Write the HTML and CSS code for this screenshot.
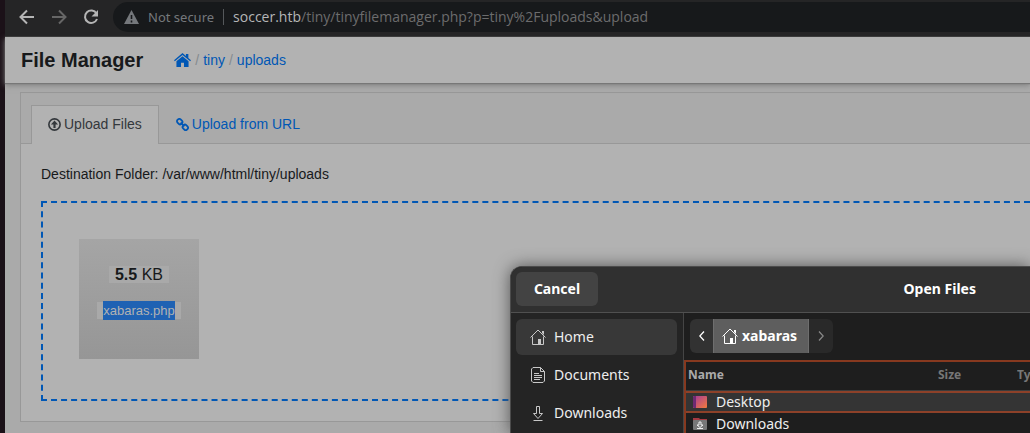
FILE: index.html
```
<!DOCTYPE html>
<html lang="en">
<head>
<meta charset="utf-8">
<title>File Manager</title>
<link rel="stylesheet" href="styles.css">
</head>
<body>
<svg class="defs" aria-hidden="true">
  <symbol id="house" viewBox="0 0 16 16"><path d="M.5 8.500 8 1l7.500 7.500M2.500 7.500v8h11v-8" fill="none" stroke="currentColor"/><path d="M8 10h3v6H8zM12 2h2v4l-2-2z" fill="currentColor"/></symbol>
</svg>
<div class="window">
  <header class="toolbar">
    <button class="tool" aria-label="Back"><svg viewBox="0 0 16 16"><path d="M15 8H2M8 1.500 1.500 8 8 14.500" fill="none" stroke="currentColor" stroke-width="2"/></svg></button>
    <button class="tool dim" aria-label="Forward"><svg viewBox="0 0 16 16"><path d="M1 8h13M8 1.500 14.500 8 8 14.500" fill="none" stroke="currentColor" stroke-width="2"/></svg></button>
    <button class="tool" aria-label="Reload"><svg viewBox="0 0 16 16"><path d="M13.500 4.500A6.200 6.200 0 1 0 14 10" fill="none" stroke="currentColor" stroke-width="2"/><path d="M15 1v6.500H8.500z" fill="currentColor"/></svg></button>
    <div class="omnibox">
      <svg class="warn" viewBox="0 0 15 14"><path d="M7.500 0 15 14H0z" fill="currentColor"/><path d="M7.500 5v4M7.500 10.500v2" stroke="#17191b" stroke-width="1.600"/></svg>
      <span class="secure">Not secure</span>
      <span class="url"><b>soccer.htb</b>/tiny/tinyfilemanager.php?p=tiny%2Fuploads&amp;upload</span>
    </div>
  </header>
  <nav class="navbar">
    <h1 class="brand">File Manager</h1>
    <div class="crumbs">
      <a href="#" aria-label="Home"><svg class="home" viewBox="0 0 16 13"><path d="M8 0 0 6.700l.8 1L8 1.900l7.200 5.800.8-1-2.500-2.100V.8h-2.300v1.900z" fill="currentColor"/><path d="M8 3 2.300 7.600V13h4.300V9h2.800v4h4.300V7.600z" fill="currentColor"/></svg></a>
      <i>/</i><a href="#">tiny</a><i>/</i><a href="#">uploads</a>
    </div>
  </nav>
  <main class="page">
    <section class="card">
      <div class="tabs">
        <a class="tab active" href="#"><svg viewBox="0 0 12 12"><circle cx="6" cy="6" r="5.200" fill="none" stroke="currentColor" stroke-width="1.500"/><path d="M6 2.300 9.300 6H7v3.200H5V6H2.700z" fill="currentColor"/></svg>Upload Files</a>
        <a class="tab" href="#"><svg viewBox="0 0 13 13"><g fill="none" stroke="currentColor" stroke-width="1.800"><rect x="1" y="1.400" width="5.400" height="4.400" rx="1.800" transform="rotate(45 3.700 3.600)"/><rect x="6.600" y="7.200" width="5.400" height="4.400" rx="1.800" transform="rotate(45 9.300 9.400)"/><path d="m4.600 4.600 3.800 3.800"/></g></svg>Upload from URL</a>
      </div>
      <div class="body">
        <p class="dest">Destination Folder: /var/www/html/tiny/uploads</p>
        <div class="drop">
          <div class="file">
            <span class="size"><b>5.5</b> KB</span>
            <span class="name"><mark>xabaras.php</mark></span>
          </div>
        </div>
      </div>
    </section>
  </main>
</div>
<div class="dialog" role="dialog" aria-label="Open Files">
  <div class="titlebar">
    <button class="cancel">Cancel</button>
    <h2 class="title">Open Files</h2>
  </div>
  <div class="panes">
    <div class="places">
      <button class="place on"><svg viewBox="0 0 16 16"><use href="#house"/></svg>Home</button>
      <button class="place"><svg viewBox="0 0 16 16"><path d="M3 .5h7.500l4 4V14l-1.500 1.500H3L1.500 14V2zM10.500.5v4h4M4 6.500h5M4 8.500h8M4 10.500h8M4 12.500h6" fill="none" stroke="currentColor"/></svg>Documents</button>
      <button class="place"><svg viewBox="0 0 16 16"><path d="M6.500 1.500h3v7h3L8 13.500 3.500 8.500h3zM3.500 15.500h9" fill="none" stroke="currentColor"/></svg>Downloads</button>
    </div>
    <div class="browser">
      <div class="path">
        <button class="step" aria-label="Previous"><svg viewBox="0 0 6 10"><path d="M5 .5.8 5 5 9.500" fill="none" stroke="currentColor" stroke-width="1.300"/></svg></button>
        <button class="here"><svg viewBox="0 0 16 16"><use href="#house"/></svg>xabaras</button>
        <button class="step off" aria-label="Next"><svg viewBox="0 0 6 10"><path d="M1 .5 5.200 5 1 9.500" fill="none" stroke="currentColor" stroke-width="1.300"/></svg></button>
      </div>
      <div class="listbox">
        <table class="list">
          <thead><tr><th class="cname">Name</th><th class="csize">Size</th><th class="ctype">Type</th></tr></thead>
          <tbody>
            <tr class="sel"><td colspan="3"><div class="entry"><svg viewBox="0 0 14 12"><defs><linearGradient id="g" x2="1" y2="1"><stop stop-color="#a13a9c"/><stop offset="1" stop-color="#f47a3c"/></linearGradient></defs><rect width="14" height="12" rx="1" fill="url(#g)"/><path d="M0 1 1 0h2v12H1L0 11z" fill="#6d2a72"/></svg>Desktop</div></td></tr>
            <tr><td colspan="3"><div class="entry"><svg viewBox="0 0 14 12"><path d="M0 0h6l1 1h7v4H0z" fill="#a53a42"/><rect y="2" width="14" height="10" rx="1" fill="#777"/><path d="M6 4h2v3h2L7 9.500 4 7h2zM4 10.500h6" fill="none" stroke="#eee"/></svg>Downloads</div></td></tr>
          </tbody>
        </table>
      </div>
    </div>
  </div>
</div>
</body>
</html>
```
FILE: styles.css
```
* { box-sizing: border-box; }
body {
  margin: 0;
  height: 100vh;
  overflow: hidden;
  position: relative;
  background: #aaa;
  font: 14px/20px "Liberation Sans", Arial, sans-serif;
  color: #17191b;
}
button { border: 0; padding: 0; background: none; font: inherit; color: inherit; }
a { color: #0057b5; text-decoration: none; }
svg { flex: none; }
.defs { position: absolute; width: 0; height: 0; }
.window { min-height: 100vh; border-left: 5px solid #1b1118; }

.toolbar {
  position: relative;
  z-index: 1;
  display: flex;
  align-items: center;
  height: 37px;
  padding: 0 0 3px 14px;
  background: #252526;
  border-bottom: 1px solid #3b3b3b;
}
.tool { width: 16px; height: 16px; margin-right: 16px; color: #b5b5b5; }
.tool svg { display: block; width: 16px; height: 16px; }
.tool.dim { color: #666; }
.omnibox {
  flex: 1;
  display: flex;
  align-items: center;
  height: 30px;
  margin-left: -2px;
  padding-left: 11px;
  border-radius: 15px 0 0 15px;
  background: #17191b;
  color: #75787c;
  font: 13px/16px "Noto Sans", sans-serif;
  white-space: nowrap;
}
.warn { width: 15px; height: 14px; margin-right: 9px; }
.secure { padding-right: 9px; border-right: 1px solid #55585b; }
.url { padding-left: 9px; font: 14px/16px "Open Sans", sans-serif; color: #6c6c6d; }
.url b { font-weight: 400; color: #b5b6b7; }

.navbar {
  position: relative;
  display: flex;
  align-items: center;
  height: 46px;
  padding-left: 16px;
  background: #b2b2b2;
  box-shadow: 0 1px 1px #777, 0 2px 6px #7c7c7c;
}
.brand { margin: 0 31px 0 0; font-size: 20px; line-height: 24px; }
.crumbs { display: flex; align-items: center; }
.crumbs i { margin: 0 4px; font-style: normal; color: #858a8e; }
.home { display: block; width: 17px; height: 14px; }

.page { padding: 9px 0 12px 15px; }
.card { border: 1px solid #989898; border-right: 0; background: #b2b2b2; }
.tabs {
  display: flex;
  padding: 12px 0 0 10px;
  background: #aaa;
  border-bottom: 1px solid #989898;
}
.tab {
  display: flex;
  align-items: center;
  height: 39px;
  margin-bottom: -1px;
  padding: 0 16px 2px;
  border: 1px solid transparent;
  border-bottom: 0;
}
.tab svg { width: 13px; height: 13px; margin-right: 3px; }
.tab.active { color: #34383c; background: #b2b2b2; border-color: #989898; }
.body { padding: 20px 0 20px 20px; }
.dest { margin: 0 0 17px; }
.drop {
  height: 200px;
  padding: 36px;
  border: 2px dashed #0057b5;
  border-right: 0;
}
.file {
  display: flex;
  flex-direction: column;
  align-items: center;
  width: 120px;
  height: 120px;
  padding-top: 27px;
  background: linear-gradient(#a5a5a5, #969696);
}
.size, .name { background: #a9a9a9; }
.size { padding: 0 6px; font-size: 16px; line-height: 17px; margin-bottom: 19px; }
.name { padding: 0 6px; font-size: 13px; line-height: 17px; }
mark { display: block; margin: -1px 0; line-height: 19px; color: #b2b2b2; background: #1f62b3; }

.dialog {
  position: absolute;
  left: 510px;
  right: 0;
  top: 266px;
  bottom: 0;
  display: flex;
  flex-direction: column;
  overflow: hidden;
  border: 1px solid #4b4b4b;
  border-width: 1px 0 0 1px;
  border-radius: 12px 0 0 0;
  background: #1e1e1e;
  color: #eee;
  box-shadow: 0 0 16px #555;
  font: 14px/20px "Noto Sans", sans-serif;
}
.titlebar {
  flex: none;
  display: flex;
  align-items: center;
  justify-content: space-between;
  height: 46px;
  padding: 0 54px 1px 5px;
  background: #303030;
  border-bottom: 1px solid #505050;
  font-weight: 700;
  color: #fff;
}
.cancel { width: 82px; height: 34px; border-radius: 6px; background: #434343; }
.title { margin: 0; font-size: 14px; line-height: 20px; }
.panes { flex: 1; display: flex; min-height: 0; }
.places {
  flex: none;
  display: flex;
  flex-direction: column;
  gap: 2px;
  width: 173px;
  padding: 6px 6px 0 5px;
  border-right: 1px solid #454545;
  background: #242424;
}
.place {
  flex: none;
  display: flex;
  align-items: center;
  gap: 8px;
  height: 36px;
  padding-left: 14px;
  border-radius: 6px;
}
.place svg { width: 16px; height: 16px; color: #c8c8c8; }
.place.on { background: #383838; }
.browser { flex: 1; min-width: 0; display: flex; flex-direction: column; }
.path { flex: none; display: flex; height: 34px; margin: 6px 0 7px 6px; color: #fff; }
.step { width: 23px; background: #323232; border-radius: 6px 0 0 6px; }
.step svg { width: 6px; height: 10px; }
.step.off { width: 24px; color: #888; background: #292929; border-radius: 0 6px 6px 0; }
.here {
  display: flex;
  align-items: center;
  gap: 4px;
  width: 96px;
  padding-left: 8px;
  border: 1px solid #6e6e6e;
  border-width: 0 1px;
  background: #5e5e5e;
  font-weight: 700;
}
.here svg { width: 16px; height: 16px; }
.listbox {
  flex: 1;
  min-height: 0;
  overflow: hidden;
  border: 2px solid #87391f;
  border-width: 2px 0 0 2px;
}
.list {
  width: 100%;
  table-layout: fixed;
  border-collapse: separate;
  border-spacing: 0;
}
th {
  height: 29px;
  padding: 0 0 2px;
  text-align: left;
  font-size: 12px;
  line-height: 16px;
  color: #777;
  white-space: nowrap;
  overflow: hidden;
  border-bottom: 1px solid #3c3c3c;
}
.cname { padding-left: 2px; color: #aaa; }
.csize { width: 79px; }
.ctype { width: 13px; }
td { height: 22px; padding: 0 0 0 7px; vertical-align: top; }
.entry { display: flex; align-items: center; gap: 9px; height: 22px; }
.entry svg { width: 14px; height: 12px; }
.sel td { background: #343434; box-shadow: inset 0 2px #8d4129, inset 0 -2px #8d4129; }
```
